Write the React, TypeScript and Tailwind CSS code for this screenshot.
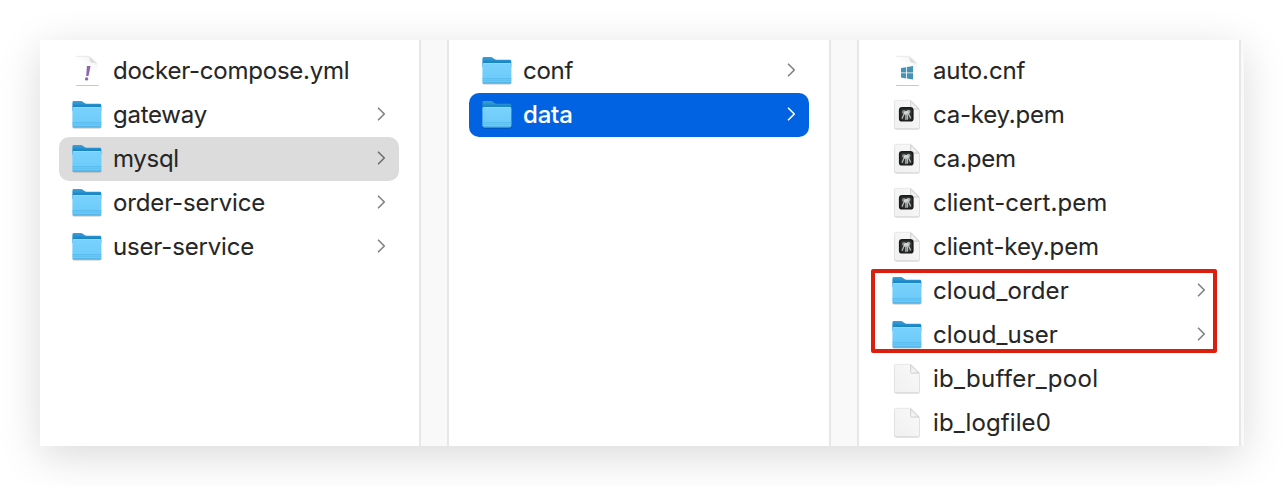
import React from "react";

type Kind = "folder" | "yml" | "cnf" | "key" | "file";
type Entry = { name: string; kind: Kind; track: string; state?: "path" | "selected" };

const columns: Entry[][] = [
  [
    { name: "docker-compose.yml", kind: "yml", track: "tracking-[-0.24px]" },
    { name: "gateway", kind: "folder", track: "tracking-[-0.25px]" },
    { name: "mysql", kind: "folder", track: "tracking-[-0.3px]", state: "path" },
    { name: "order-service", kind: "folder", track: "tracking-[-0.14px]" },
    { name: "user-service", kind: "folder", track: "tracking-[-0.16px]" },
  ],
  [
    { name: "conf", kind: "folder", track: "tracking-[-0.3px]" },
    { name: "data", kind: "folder", track: "tracking-[-0.2px]", state: "selected" },
  ],
  [
    { name: "auto.cnf", kind: "cnf", track: "tracking-[-0.14px]" },
    { name: "ca-key.pem", kind: "key", track: "tracking-[-0.22px]" },
    { name: "ca.pem", kind: "key", track: "tracking-[-0.2px]" },
    { name: "client-cert.pem", kind: "key", track: "tracking-[0.05px]" },
    { name: "client-key.pem", kind: "key", track: "tracking-[-0.08px]" },
    { name: "cloud_order", kind: "folder", track: "tracking-[0.12px]" },
    { name: "cloud_user", kind: "folder", track: "tracking-[0.14px]" },
    { name: "ib_buffer_pool", kind: "file", track: "tracking-[0.28px]" },
    { name: "ib_logfile0", kind: "file", track: "tracking-[0.1px]" },
  ],
];

function Defs() {
  return (
    <svg className="absolute h-0 w-0" aria-hidden="true">
      <defs>
        <linearGradient id="front" x1="0" y1="0" x2="0" y2="1">
          <stop offset="0" stopColor="#79d2fc" />
          <stop offset="1" stopColor="#6ac9f9" />
        </linearGradient>
        <linearGradient id="back" x1="0" y1="0" x2="0" y2="1">
          <stop offset="0" stopColor="#3d9fd6" />
          <stop offset="0.6" stopColor="#1483c6" />
          <stop offset="1" stopColor="#1483c6" />
        </linearGradient>
        <linearGradient id="page" x1="0" y1="1" x2="1" y2="0">
          <stop offset="0" stopColor="#f0f0f0" />
          <stop offset="1" stopColor="#f9f9f9" />
        </linearGradient>
        <linearGradient id="fold" x1="0" y1="1" x2="1" y2="0">
          <stop offset="0" stopColor="#ffffff" />
          <stop offset="0.42" stopColor="#eeeeee" />
          <stop offset="0.52" stopColor="#bcbcbc" />
        </linearGradient>
        <linearGradient id="sheen" x1="0" y1="1" x2="1" y2="0">
          <stop offset="0.4" stopColor="#ffffff" />
          <stop offset="1" stopColor="#dedede" />
        </linearGradient>
      </defs>
    </svg>
  );
}

function Folder() {
  return (
    <svg viewBox="0 0 32 32" className="h-8 w-8">
      <rect x="1.3" y="26" width="29.2" height="3.4" rx="1.6" fill="#000" opacity="0.25" />
      <path d="M1.400 4C1.400 2.700 2 2.100 3.200 2.100h6.600c1 0 1.600.3 2.300.9l1.400 1c.6.5 1.100.7 2 .7H28.500c1.200 0 1.800.6 1.800 1.800V12H1.400Z" fill="url(#back)" />
      <path d="M1.400 9.700C1.400 8.600 2 8.100 3 8.100h25.800c1 0 1.600.5 1.600 1.600v16.900c0 1.200-.6 1.800-1.800 1.800H3.200c-1.200 0-1.800-.6-1.800-1.800Z" fill="url(#front)" />
      <path d="M2.600 8.500h26.600" stroke="#97defe" strokeWidth="0.7" />
      <path d="M1.400 23.500h29M1.400 25.200h29" stroke="#4fb5e8" strokeWidth="0.6" />
      <path d="M2 27.900h27.800" stroke="#409fd0" strokeWidth="0.8" />
    </svg>
  );
}

function Doc({ kind }: { kind: Kind }) {
  if (kind === "yml" || kind === "cnf") {
    return (
      <svg viewBox="0 0 32 32" className="h-8 w-8">
        <path d="M5 1.200h12.500c2 0 3 .5 4.200 1.800l4.700 5V15H5Z" fill="url(#sheen)" opacity="0.5" />
        <path d="M5 1.300h12.500" stroke="#e2e2e2" strokeWidth="0.7" />
        <path d="M17.300 1.400c2.400 1 7.200 5.300 9.500 8.400-1.700-1.900-4.400-2.100-6-2.300-1.300-.2-1.700-.8-1.900-2.200-.2-1.500-.5-3-1.600-3.900Z" fill="#dcdcdc" />
        <path d="M5 30.500h22.800" stroke="#c2c2c2" strokeWidth="0.9" />
        {kind === "yml" ? (
          <g fill="#9164b4">
            <path d="M15.900 11h3.700l-2.100 10h-2.300Z" />
            <circle cx="15.600" cy="23.900" r="1.700" />
          </g>
        ) : (
          <g fill="#4692b3">
            <path d="m10 13 5.200-.8v5.200H10ZM16 12.100l6.100-1v6.300H16ZM10 18.200h5.200v5.200l-5.200-.8ZM16 18.200h6.100v6.300l-6.100-1Z" />
          </g>
        )}
      </svg>
    );
  }
  return (
    <svg viewBox="0 0 32 32" className="h-8 w-8">
      <path d="M3.300 3h16l9.400 8.400v17.100c0 1.200-.7 1.900-1.800 1.900H5.200c-1.300 0-1.900-.7-1.900-1.900Z" fill="#cbcbcb" />
      <path d="M5 1.300h14.700l8.800 8.800v17.600c0 1.300-.6 1.900-1.800 1.900H5.200c-1.200 0-1.800-.6-1.800-1.900V3.100c0-1.200.5-1.800 1.600-1.800Z" fill="url(#page)" stroke="#dcdcdc" strokeWidth="0.6" />
      <path d="M19.700 1.500v7.400c0 .8.300 1.200 1.100 1.200h7.500Z" fill="url(#fold)" />
      <path d="M19.700 1.800v7.100c0 .8.300 1.200 1.100 1.200h7.200" fill="none" stroke="#bdbdbd" strokeWidth="0.7" />
      {kind === "key" && (
        <g>
          <rect x="7.900" y="8" width="14.700" height="14.600" rx="3.200" fill="#1b1c1c" />
          <rect x="9.500" y="9.600" width="11.500" height="11.400" rx="2" fill="#2d2f2f" />
          <circle cx="13" cy="13.100" r="2" fill="#858b89" />
          <circle cx="17.400" cy="12.800" r="2.100" fill="#a4aaa7" />
          <ellipse cx="15.300" cy="14" rx="2.700" ry="2" fill="#d5dbd9" />
          <path d="m13 15.200-1.800 4M14.900 15v5.500M16.500 15v5M17.800 15.200l1.700 3.800" stroke="#b4bab8" strokeWidth="1.300" strokeLinecap="round" />
        </g>
      )}
    </svg>
  );
}

function Row({ entry }: { entry: Entry }) {
  const tone =
    entry.state === "selected"
      ? "bg-[#0163e1] text-white font-medium"
      : entry.state === "path"
        ? "bg-[#dcdcdc] text-[#262626]"
        : "text-[#262626]";
  const chevron = entry.state === "selected" ? "text-white" : entry.state === "path" ? "text-[#6e6e6e]" : "text-[#808080]";
  return (
    <div className={`flex h-11 w-[340px] items-center rounded-[10px] pl-3 pr-[13px] ${tone}`}>
      {entry.kind === "folder" ? <Folder /> : <Doc kind={entry.kind} />}
      <span className={`ml-[10px] flex-1 whitespace-nowrap text-[24px] leading-[44px] [-webkit-text-stroke:0.08px_currentColor] ${entry.track}`}>{entry.name}</span>
      {entry.kind === "folder" && (
        <svg viewBox="0 0 9 14" className={`mb-[3px] h-[14px] w-[9px] ${chevron}`}>
          <path d="m1.500 1.200 5.800 5.800-5.800 5.800" fill="none" stroke="currentColor" strokeWidth="1.600" strokeLinecap="round" strokeLinejoin="round" />
        </svg>
      )}
    </div>
  );
}

export default function App() {
  return (
    <main className="h-[486px] w-[1284px] overflow-hidden bg-white p-10 font-['Inter',sans-serif]">
      <Defs />
      <div className="flex h-[406px] w-[1204px] bg-[#f9f9f9] shadow-[0_10px_40px_rgba(0,0,0,0.15)]">
        <section className="w-[381px] border-r-2 border-[#e7e7e7] bg-white pl-[19px] pt-[9px]">
          {columns[0].map((e) => <Row key={e.name} entry={e} />)}
        </section>
        <section className="ml-[26px] w-[384px] border-x-2 border-[#e7e7e7] bg-white pl-5 pt-[9px]">
          {columns[1].map((e) => <Row key={e.name} entry={e} />)}
        </section>
        <section className="relative ml-[26px] w-[384px] border-x-2 border-[#e7e7e7] bg-white pl-5 pt-[9px]">
          {columns[2].map((e) => <Row key={e.name} entry={e} />)}
          <div className="absolute left-[12px] top-[229px] h-[84px] w-[346px] rounded-[2px] border-4 border-[#dc1e0e]" />
        </section>
      </div>
    </main>
  );
}
